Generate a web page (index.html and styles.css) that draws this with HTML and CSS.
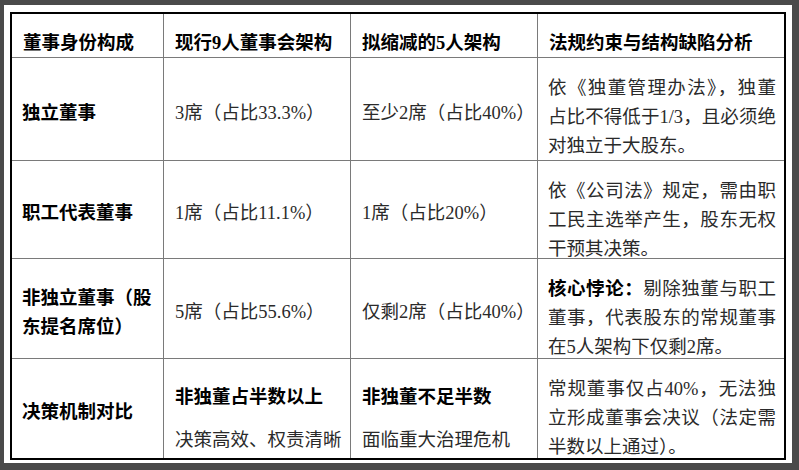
FILE: index.html
```html
<!DOCTYPE html>
<html lang="zh">
<head>
<meta charset="utf-8">
<link rel="stylesheet" href="styles.css">
</head>
<body>
<div class="panel">
  <div class="grid">
    <div class="cell head">董事身份构成</div>
    <div class="cell head">现行9人董事会架构</div>
    <div class="cell head">拟缩减的5人架构</div>
    <div class="cell head">法规约束与结构缺陷分析</div>

    <div class="cell label">独立董事</div>
    <div class="cell">3席（占比33.3%）</div>
    <div class="cell">至少2席（占比40%）</div>
    <div class="cell just">依《独董管理办法》，独董占比不得低于1/3，且必须绝对独立于大股东。</div>

    <div class="cell label">职工代表董事</div>
    <div class="cell">1席（占比11.1%）</div>
    <div class="cell">1席（占比20%）</div>
    <div class="cell just">依《公司法》规定，需由职工民主选举产生，股东无权干预其决策。</div>

    <div class="cell label">非独立董事（股东提名席位）</div>
    <div class="cell">5席（占比55.6%）</div>
    <div class="cell">仅剩2席（占比40%）</div>
    <div class="cell just"><b>核心悖论：</b>剔除独董与职工董事，代表股东的常规董事在5人架构下仅剩2席。</div>

    <div class="cell label">决策机制对比</div>
    <div class="cell stack"><b>非独董占半数以上</b><span>决策高效、权责清晰</span></div>
    <div class="cell stack"><b>非独董不足半数</b><span>面临重大治理危机</span></div>
    <div class="cell just">常规董事仅占40%，无法独立形成董事会决议（法定需半数以上通过）。</div>
  </div>
</div>
</body>
</html>
```

FILE: styles.css
```css
html, body {
  margin: 0;
  padding: 0;
}
body {
  background: #4a4a4a;
  width: 799px;
  height: 470px;
  overflow: hidden;
  font-family: "Liberation Serif", "Noto Sans CJK SC", serif;
  font-size: 18.5px;
  color: #2a2a2a;
}
.panel {
  margin: 5px 0 0 4px;
  width: 788px;
  height: 458px;
  background: #fff;
  box-sizing: border-box;
  padding: 7px 0 0 6px;
}
.grid {
  display: grid;
  width: 776px;
  height: 448px;
  box-sizing: border-box;
  border: 2px solid #000;
  background: #7a7a7a;
  gap: 1px;
  grid-template-columns: 151px 186px 186px 246px;
  grid-template-rows: 43px 102px 97px 99px 99px;
}
.cell {
  background: #fff;
  display: flex;
  flex-direction: column;
  justify-content: center;
  padding: 8px 11px 0 11px;
  line-height: 29px;
}
.head {
  font-weight: bold;
  color: #000;
  justify-content: flex-end;
  line-height: 24px;
  padding: 0 10px 2px 11px;
}
.label {
  font-weight: bold;
  color: #000;
  padding-left: 10px;
  padding-right: 4px;
}
.just {
  text-align: justify;
  display: block;
  padding: 16px 8px 0 10px;
}
.just b {
  color: #000;
}
.stack {
  gap: 14px;
  padding-top: 20px;
}
.stack b {
  color: #000;
  white-space: nowrap;
}
.stack span {
  white-space: nowrap;
}
```
